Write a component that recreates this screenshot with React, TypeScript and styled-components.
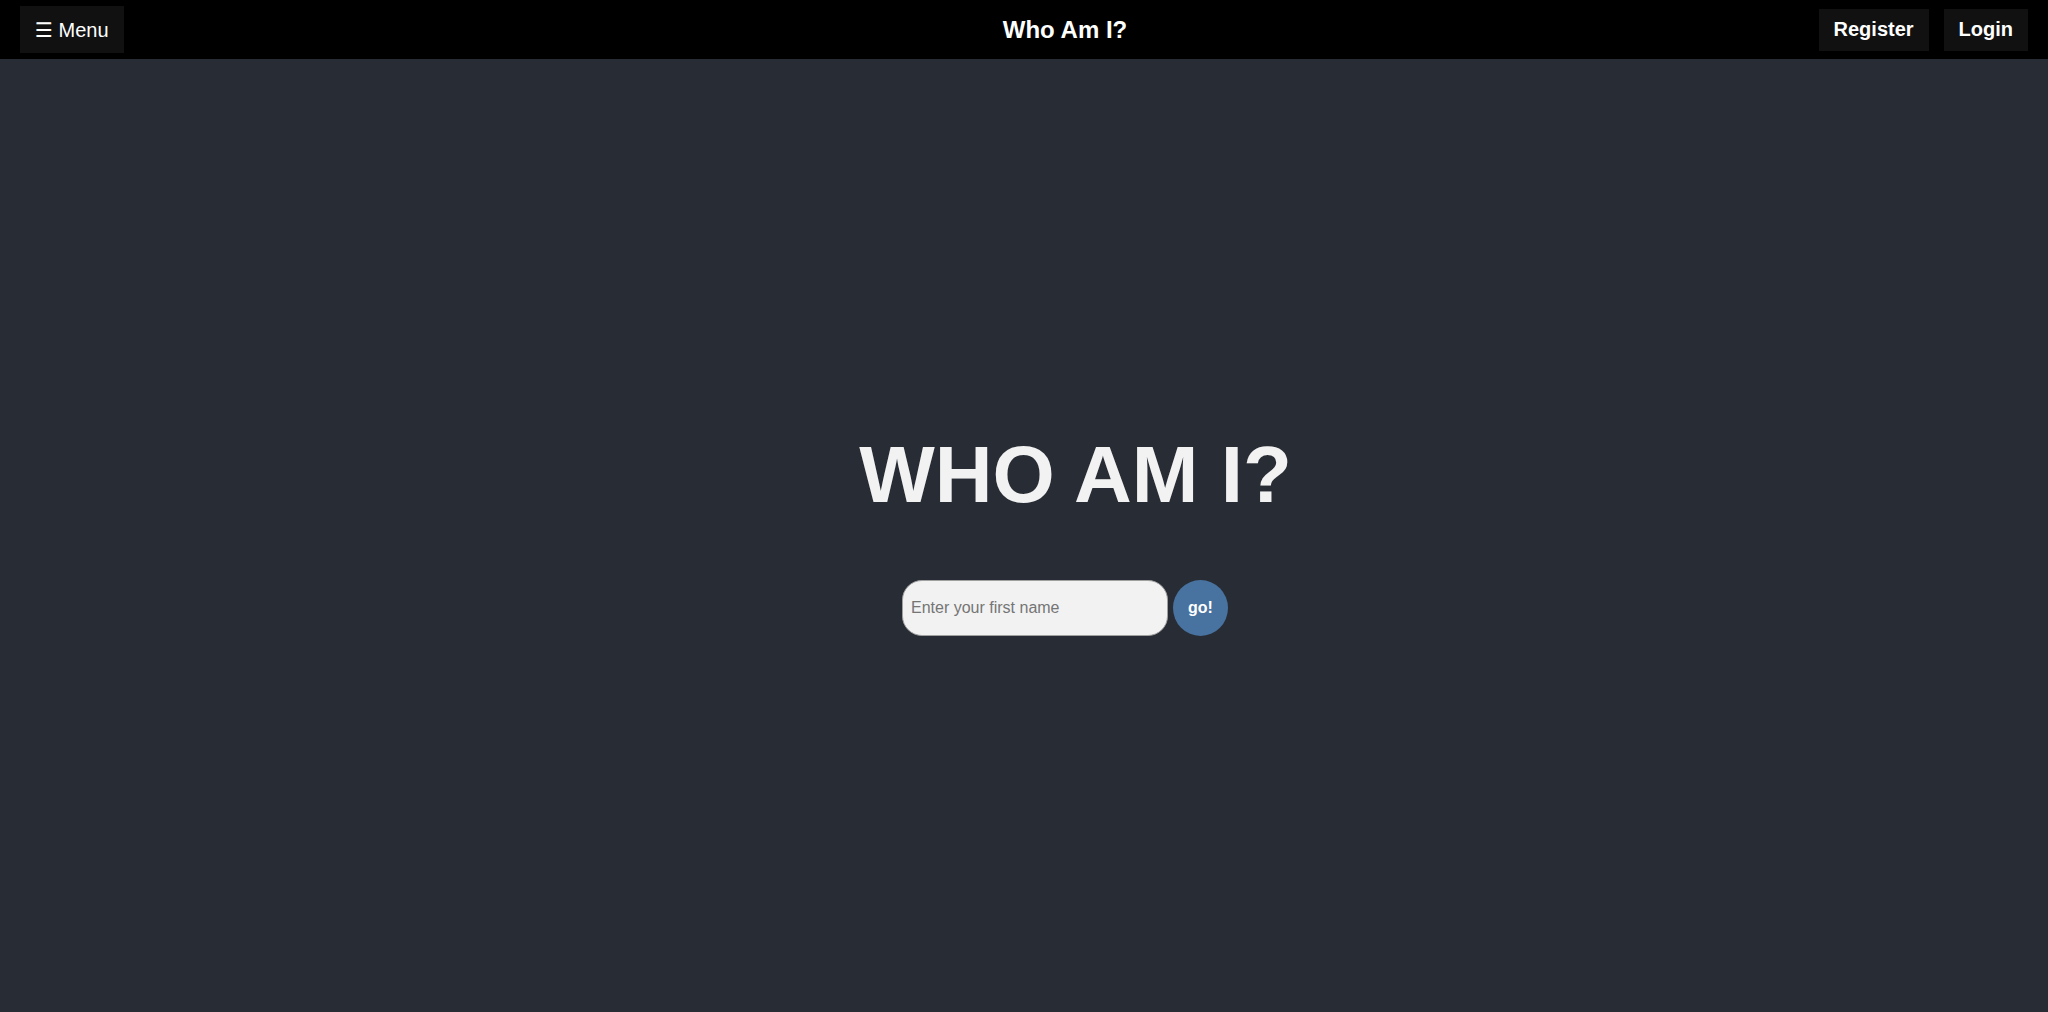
import React from "react";
import styled, { createGlobalStyle } from "styled-components";

const GlobalStyle = createGlobalStyle`
  html, body {
    margin: 0;
    padding: 0;
    background: #282c34;
    font-family: "Liberation Sans", Arial, sans-serif;
  }
  * { box-sizing: border-box; }
`;

const Header = styled.header`
  height: 59px;
  background: #000;
  display: flex;
  align-items: center;
  padding: 0 20px;
`;

const Side = styled.div<{ $align: "start" | "end" }>`
  flex: 1;
  display: flex;
  justify-content: ${(p) => (p.$align === "start" ? "flex-start" : "flex-end")};
  align-items: center;
  gap: 15px;
`;

const MenuButton = styled.button`
  background: #111;
  color: #fff;
  border: none;
  height: 47px;
  padding: 0 15px;
  font-family: "Liberation Sans", "DejaVu Sans", sans-serif;
  font-size: 20px;
  cursor: pointer;
`;

const Title = styled.div`
  color: #fff;
  font-weight: bold;
  font-size: 24px;
  margin-left: 82px;
`;

const NavButton = styled.button`
  background: #111;
  color: #fff;
  border: none;
  height: 42px;
  padding: 0 15px;
  font-family: "Liberation Sans", Arial, sans-serif;
  font-weight: bold;
  font-size: 20px;
  cursor: pointer;
`;

const Main = styled.main`
  min-height: calc(100vh - 59px);
  display: flex;
  flex-direction: column;
  align-items: center;
  justify-content: center;
  padding-left: 90px;
`;

const Heading = styled.h1`
  margin: 54px 0 59px 13px;
  font-size: 80px;
  font-weight: bold;
  color: #f2f2f2;
  line-height: normal;
`;

const Form = styled.form`
  display: flex;
  align-items: center;
  gap: 5px;
  margin-left: -8px;
  margin-bottom: 60px;
`;

const NameInput = styled.input`
  width: 266px;
  height: 56px;
  border-radius: 20px;
  border: 1px solid #a0a0a0;
  background: #f2f2f2;
  padding: 0 8px;
  font-family: "Liberation Sans", Arial, sans-serif;
  font-size: 16px;
  color: #333;
  outline: none;
  &::placeholder { color: #757575; }
`;

const GoButton = styled.button`
  width: 55px;
  height: 56px;
  border-radius: 50%;
  border: none;
  background: #48729f;
  color: #fff;
  font-family: "Liberation Sans", Arial, sans-serif;
  font-weight: bold;
  font-size: 16px;
  cursor: pointer;
`;

export default function App() {
  return (
    <>
      <GlobalStyle />
      <Header>
        <Side $align="start">
          <MenuButton>☰ Menu</MenuButton>
        </Side>
        <Title>Who Am I?</Title>
        <Side $align="end">
          <NavButton>Register</NavButton>
          <NavButton>Login</NavButton>
        </Side>
      </Header>
      <Main>
        <Heading>WHO AM I?</Heading>
        <Form onSubmit={(e) => e.preventDefault()}>
          <NameInput placeholder="Enter your first name" />
          <GoButton type="submit">go!</GoButton>
        </Form>
      </Main>
    </>
  );
}
